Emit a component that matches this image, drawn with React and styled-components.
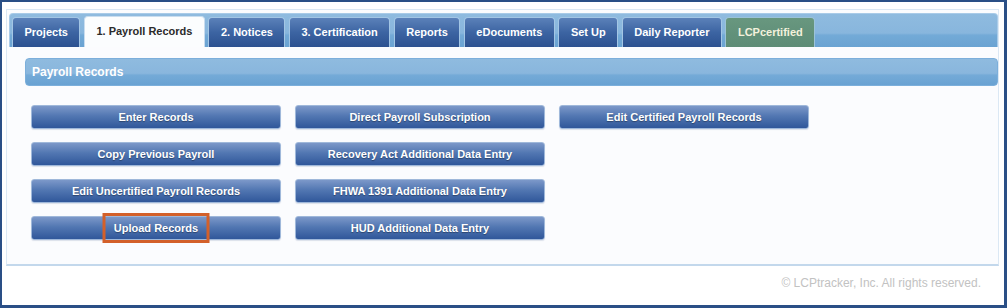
import React from "react";
import styled, { createGlobalStyle, css } from "styled-components";

const GlobalStyle = createGlobalStyle`
  *, *::before, *::after { box-sizing: border-box; }
  body {
    margin: 0;
    font-family: "Liberation Sans", Arial, sans-serif;
    background: #fff;
  }
`;

const Frame = styled.div`
  width: 1007px;
  height: 308px;
  border: solid #2a4f86;
  border-width: 2px 3px 3px 2px;
  background: #fff;
  padding: 7px 5px 0 4px;
  display: flex;
  flex-direction: column;
`;

const Panel = styled.div`
  background: #fbfcfe;
  border: 1px solid #dbe8f4;
  border-bottom: 2px solid #c3d8ec;
  padding: 3px 0 24px 2px;
`;

const TabBar = styled.div`
  height: 34px;
  display: flex;
  align-items: flex-end;
  gap: 3.5px;
  padding-left: 2px;
  border: 1px solid #a9cbe8;
  border-bottom: none;
  border-radius: 4px 4px 0 0;
  background: linear-gradient(
    to bottom,
    #8fbbdf 0%,
    #88b6dd 58%,
    #73aad7 64%,
    #6aa3d2 100%
  );
`;

const tabKinds = {
  normal: css`
    color: #fff;
    background: linear-gradient(to bottom, #5b81b9 0%, #3c64a2 50%, #2c5190 100%);
    border-color: #a3c6e5;
  `,
  active: css`
    color: #2b2b2b;
    background: #fbfdfe;
    border-color: #c9ddef;
    height: 31px;
  `,
  green: css`
    color: #f3f1dc;
    background: linear-gradient(to bottom, #68977f 0%, #5d8c76 100%);
    border-color: #9cc3d8;
  `,
};

const Tab = styled.div`
  height: 30px;
  padding: 0 11.5px;
  border: 1px solid;
  border-bottom: none;
  border-radius: 4px 4px 0 0;
  font-size: 11px;
  font-weight: bold;
  line-height: 28px;
  white-space: nowrap;
  ${({ $kind }) => tabKinds[$kind || "normal"]}
`;

const Content = styled.div`
  padding: 11px 0 0 16px;
`;

const SectionHeader = styled.div`
  height: 28px;
  padding-left: 6px;
  display: flex;
  align-items: center;
  border: 1px solid #7cafdb;
  border-radius: 4px;
  color: #fff;
  font-size: 12px;
  font-weight: bold;
  background: linear-gradient(
    to bottom,
    #8fbbdf 0%,
    #89b6dd 55%,
    #74aad7 62%,
    #69a2d2 100%
  );
`;

const ButtonGrid = styled.div`
  margin: 19px 0 0 6px;
  display: grid;
  grid-template-columns: repeat(3, 250px);
  column-gap: 14px;
  row-gap: 13px;
`;

const ActionButton = styled.div`
  position: relative;
  height: 24px;
  border: 1px solid #9fb8da;
  border-radius: 3px;
  background: linear-gradient(to bottom, #7c98c9 0%, #5277b2 45%, #30579a 100%);
  color: #fff;
  font-size: 11px;
  font-weight: bold;
  display: flex;
  align-items: center;
  justify-content: center;
  text-shadow: 0 1px 1px rgba(0, 0, 0, 0.35);
  box-shadow: 0 1px 1px rgba(40, 70, 120, 0.15);
  white-space: nowrap;

  ${({ $highlight }) =>
    $highlight &&
    css`
      &::after {
        content: "";
        position: absolute;
        left: 50%;
        top: -4px;
        width: 107px;
        height: 30px;
        transform: translateX(-50%);
        border: 3px solid #d3602a;
      }
    `}
`;

const Footer = styled.div`
  flex: 1;
  padding: 10px 18px 0 0;
  text-align: right;
  font-size: 12px;
  color: #c2c2c2;
`;

const tabs = [
  { label: "Projects" },
  { label: "1. Payroll Records", kind: "active" },
  { label: "2. Notices" },
  { label: "3. Certification" },
  { label: "Reports" },
  { label: "eDocuments" },
  { label: "Set Up" },
  { label: "Daily Reporter" },
  { label: "LCPcertified", kind: "green" },
];

// grid fills row by row, empty string = empty cell
const buttons = [
  "Enter Records",
  "Direct Payroll Subscription",
  "Edit Certified Payroll Records",
  "Copy Previous Payroll",
  "Recovery Act Additional Data Entry",
  "",
  "Edit Uncertified Payroll Records",
  "FHWA 1391 Additional Data Entry",
  "",
  "Upload Records",
  "HUD Additional Data Entry",
  "",
];

export default function App() {
  return (
    <>
      <GlobalStyle />
      <Frame>
        <Panel>
          <TabBar>
            {tabs.map((t) => (
              <Tab key={t.label} $kind={t.kind}>
                {t.label}
              </Tab>
            ))}
          </TabBar>
          <Content>
            <SectionHeader>Payroll Records</SectionHeader>
            <ButtonGrid>
              {buttons.map((b, i) =>
                b ? (
                  <ActionButton key={i} $highlight={b === "Upload Records"}>
                    {b}
                  </ActionButton>
                ) : (
                  <div key={i} />
                )
              )}
            </ButtonGrid>
          </Content>
        </Panel>
        <Footer>© LCPtracker, Inc. All rights reserved.</Footer>
      </Frame>
    </>
  );
}
